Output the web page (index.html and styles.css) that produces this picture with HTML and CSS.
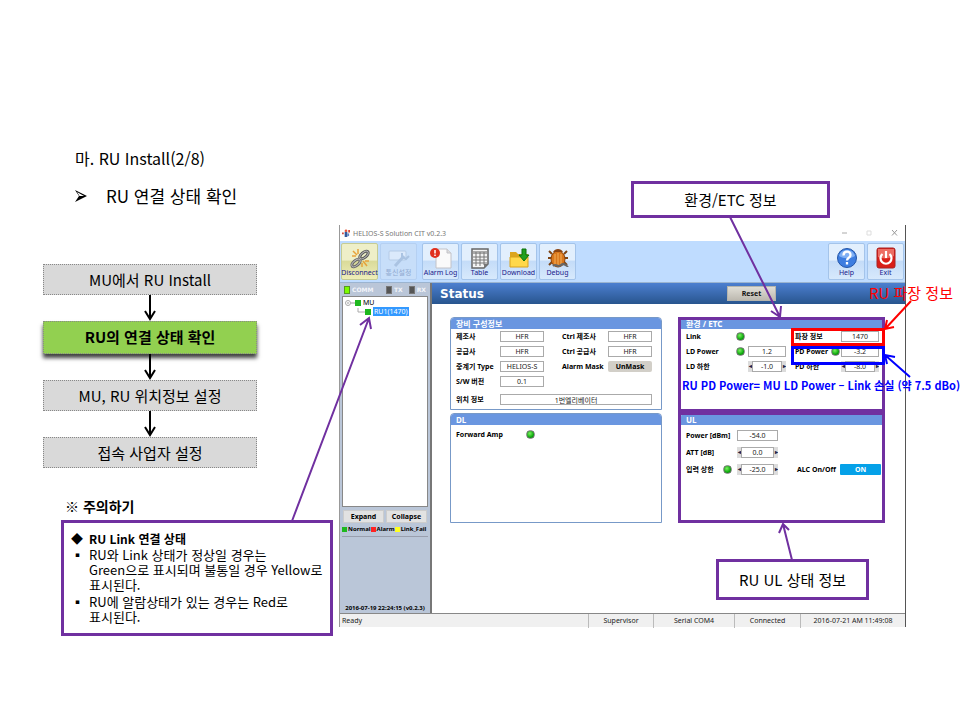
FILE: index.html
```html
<!DOCTYPE html>
<html lang="ko">
<head>
<meta charset="utf-8">
<title>RU Install</title>
<link rel="stylesheet" href="styles.css">
</head>
<body>
<main class="slide">
  <section class="guide">
    <h1 class="title">마. RU Install(2/8)</h1>
    <h2 class="subtitle"><svg class="chevron" viewBox="0 0 12 12"><path d="M0 0 12 6 0 12 4 6Z"/><path d="M2 2 9 6H4.500Z" fill="#fff"/></svg>RU 연결 상태 확인</h2>
    <ol class="flow">
      <li class="step">MU에서 RU Install</li>
      <li class="link"><svg viewBox="0 0 14 26"><path d="M7 0V24M2 16 7 24 12 16"/></svg></li>
      <li class="step current">RU의 연결 상태 확인</li>
      <li class="link"><svg viewBox="0 0 14 26"><path d="M7 0V24M2 16 7 24 12 16"/></svg></li>
      <li class="step">MU, RU 위치정보 설정</li>
      <li class="link"><svg viewBox="0 0 14 26"><path d="M7 0V24M2 16 7 24 12 16"/></svg></li>
      <li class="step">접속 사업자 설정</li>
    </ol>
    <h3 class="caution">※ 주의하기</h3>
    <div class="note">
      <h4>RU Link 연결 상태</h4>
      <ul>
        <li>RU와 Link 상태가 정상일 경우는<br>Green으로 표시되며 불통일 경우 Yellow로<br>표시된다.</li>
        <li>RU에 알람상태가 있는 경우는 Red로<br>표시된다.</li>
      </ul>
    </div>
  </section>

  <section class="app">
    <header class="titlebar">
      <svg class="logo" viewBox="0 0 9 9"><path d="M3 3h3v6H3z" fill="#345a9c"/><circle cx="4.500" cy="2" r="1.500" fill="#e8563a"/><path d="M0 4h2v2H0zM7 1h2v3H7z" fill="#d24a3a"/><path d="M6 5h2v3H6z" fill="#5f86c4"/></svg>
      <span>HELIOS-S Solution CIT v0.2.3</span>
      <svg class="winctl" viewBox="0 0 58 8"><path d="M1 4H6" stroke="#aaa"/><path d="M26 2h4v4h-4z" stroke="#ddd" fill="none"/><path d="M51 1 56 6.500M56 1 51 6.500" stroke="#999"/></svg>
    </header>
    <nav class="toolbar">
      <button class="tool active"><svg viewBox="0 0 22 22"><g fill="none" stroke-width="3"><ellipse cx="15" cy="8" rx="5" ry="2.500" transform="rotate(-40 15 8)" stroke="#555"/><ellipse cx="7" cy="16" rx="5" ry="2.500" transform="rotate(-40 7 16)" stroke="#666"/></g><g fill="none" stroke="#bbb"><ellipse cx="15" cy="8" rx="5" ry="2.500" transform="rotate(-40 15 8)"/><ellipse cx="7" cy="16" rx="5" ry="2.500" transform="rotate(-40 7 16)"/></g><path d="M4 4 8 8M9 2v5M3 9h4M14 14l4 5M13 16v4M16 14h4" stroke="#e7a23a" stroke-width="1.500"/></svg>Disconnect</button>
      <button class="tool" disabled><svg viewBox="0 0 22 22"><rect x="1" y="4" width="17" height="9" rx="1" fill="#dbe9fb" stroke="#b5cbe6"/><path d="M7 19 16 9" stroke="#aac3e2" stroke-width="3"/><path d="M14 6v4l4 2 3-3" fill="none" stroke="#aac3e2" stroke-width="2"/></svg>통신설정</button>
      <button class="tool gap"><svg viewBox="0 0 22 22"><path d="M6 2h11l4 4v15H6z" fill="#fafafa" stroke="#c2c2c8"/><path d="M17 2v4h4" fill="#ddd" stroke="#c2c2c8"/><circle cx="5" cy="6" r="5" fill="#e0301e"/><path d="M5 3v3.500M5 7.500v1.500" stroke="#fff" stroke-width="1.500"/></svg>Alarm Log</button>
      <button class="tool"><svg viewBox="0 0 22 22"><path d="M3 2h16v15l-4 4H3z" fill="#f4f4f4" stroke="#666" stroke-width="1.500"/><path d="M4 4h14v3H4z" fill="#aaa"/><path d="M4 10h14M4 13h14M4 16h14M7 5v14M11 5v14M15 5v13" stroke="#777" fill="none"/><path d="M15 21v-4h4z" fill="#777"/></svg>Table</button>
      <button class="tool"><svg viewBox="0 0 22 22"><path d="M2 5h6l2 2h10v13H2z" fill="#dca51f"/><path d="M2 10h18v10H2z" fill="#ffd84a" stroke="#d9a21c"/><path d="M14 2h4v6h3l-5 6-5-6h3z" fill="#20a020" stroke="#0b710b"/></svg>Download</button>
      <button class="tool"><svg viewBox="0 0 22 22"><path d="M5 7 2 4M17 7l3-3M5 11H1M17 11h4M5 15l-3 3M17 15l3 3" stroke="#7e4515" stroke-width="2"/><ellipse cx="11" cy="12" rx="7" ry="8" fill="#d9771c" stroke="#8d450d"/><path d="M6 5c2-4 8-4 10 0z" fill="#8b4513"/><path d="M8 7v11M11 6v13M14 7v11" stroke="#f5b15a"/><path d="M6 19c3-3 5 2 8-1s6 2 7 1" stroke="#666" stroke-width="2" fill="none"/></svg>Debug</button>
      <button class="tool end"><svg viewBox="0 0 22 22"><circle cx="11" cy="11" r="9.500" fill="#3d7de0" stroke="#2456a8"/><path d="M3 9c2-8 14-8 16 0-5 3-11 3-16 0z" fill="#80b0f4"/><path d="M7.500 8.500c0-5 7-5 7-.5 0 3-3.500 2.500-3.500 5.500M11 15v2.500" fill="none" stroke="#fff" stroke-width="2.300"/></svg>Help</button>
      <button class="tool"><svg viewBox="0 0 22 22"><rect x="2" y="1" width="18" height="20" rx="2" fill="#d91e18" stroke="#a82222"/><path d="M3 2h16v7c-5 3-11 3-16 1z" fill="#ed6d63"/><path d="M7.500 7a5.500 5.500 0 1 0 7 0M11 4v7" fill="none" stroke="#fff" stroke-width="2.200"/></svg>Exit</button>
    </nav>
    <div class="workspace">
      <aside class="sidebar">
        <div class="comm"><span class="lamp lit">COMM</span><span class="lamp">TX</span><span class="lamp">RX</span></div>
        <div class="tree">
          <div class="node"><svg viewBox="0 0 10 8"><circle cx="3" cy="4" r="2.500" fill="#fff" stroke="#aaa"/><path d="M2 4h2M6 4h4" stroke="#999"/></svg><i class="sq green"></i>MU</div>
          <div class="node child"><svg viewBox="0 0 8 8"><path d="M1 0v4h7" fill="none" stroke="#aaa"/></svg><i class="sq green"></i><span class="selected">RU1(1470)</span></div>
        </div>
        <div class="pair"><button>Expand</button><button>Collapse</button></div>
        <div class="legend"><i class="sq green"></i>Normal<i class="sq red"></i>Alarm<i class="sq yellow"></i>Link_Fail</div>
        <time class="stamp">2016-07-19 22:24:15 (v0.2.3)</time>
      </aside>
      <div class="content">
        <div class="pagehead"><h2>Status</h2><button class="reset">Reset</button></div>
        <div class="panels">
          <section class="panel">
            <h3>장비 구성정보</h3>
            <div class="fields config">
              <label for="maker">제조사</label><input id="maker" value="HFR" readonly>
              <label for="cmaker">Ctrl 제조사</label><input id="cmaker" value="HFR" readonly>
              <label for="vendor">공급사</label><input id="vendor" value="HFR" readonly>
              <label for="cvendor">Ctrl 공급사</label><input id="cvendor" value="HFR" readonly>
              <label for="type">중계기 Type</label><input id="type" value="HELIOS-S" readonly>
              <label for="mask">Alarm Mask</label><button id="mask" class="unmask">UnMask</button>
              <label for="sw">S/W 버전</label><input id="sw" value="0.1" readonly>
              <label class="newrow" for="loc">위치 정보</label><input class="wide" id="loc" value="1번엘리베이터" readonly>
            </div>
          </section>
          <section class="panel">
            <h3>환경 / ETC</h3>
            <div class="fields etc">
              <span class="label">Link</span><i class="led"></i><span></span>
              <label class="second" for="wave">파장 정보</label><span></span><input id="wave" value="1470" readonly>
              <label for="ld">LD Power</label><i class="led"></i><input id="ld" value="1.2" readonly>
              <label class="second" for="pd">PD Power</label><i class="led"></i><input id="pd" value="-3.2" readonly>
              <label for="ldlow">LD 하한</label><span></span><span class="spin"><button aria-label="-">◂</button><input id="ldlow" value="-1.0"><button aria-label="+">▸</button></span>
              <label class="second" for="pdlow">PD 하한</label><span></span><span class="spin"><button aria-label="-">◂</button><input id="pdlow" value="-8.0"><button aria-label="+">▸</button></span>
            </div>
          </section>
          <section class="panel">
            <h3>DL</h3>
            <div class="fields dl"><span class="label">Forward Amp</span><i class="led"></i></div>
          </section>
          <section class="panel">
            <h3>UL</h3>
            <div class="fields ul">
              <label class="newrow" for="power">Power [dBm]</label><span></span><input id="power" value="-54.0" readonly>
              <label class="newrow" for="att">ATT [dB]</label><span></span><span class="spin"><button aria-label="-">◂</button><input id="att" value="0.0"><button aria-label="+">▸</button></span>
              <label class="newrow" for="inmax">입력 상한</label><i class="led"></i><span class="spin"><button aria-label="-">◂</button><input id="inmax" value="-25.0"><button aria-label="+">▸</button></span>
              <label for="alc">ALC On/Off</label><button id="alc" class="switch">ON</button>
            </div>
          </section>
        </div>
      </div>
    </div>
    <footer class="statusbar"><span>Ready</span><span>Supervisor</span><span>Serial COM4</span><span>Connected</span><span>2016-07-21 AM 11:49:08</span></footer>
  </section>

  <svg class="marks" viewBox="0 0 960 720">
    <g fill="none" stroke="#7030a0" stroke-width="2">
      <path d="M292 521 369 318M360 325 369 318 371 329"/>
      <path d="M730 217 780 317M771 311 780 317 781 306"/>
      <path d="M792 560 783 524M779 533 783 524 789 530"/>
    </g>
    <g fill="none" stroke="#7030a0" stroke-width="3"><path d="M679.500 318.500H883.500V410.500H679.500ZM679.500 413.500H883.500V521.500H679.500Z"/></g>
    <g fill="none" stroke="#f00"><path d="M792.500 329.500H883.500V344.500H792.500Z" stroke-width="3"/><path d="M911 301 885 329M887 320 885 329 894 327" stroke-width="2"/></g>
    <g fill="none" stroke="#00f"><path d="M792.500 347.500H883.500V363.500H792.500Z" stroke-width="3"/><path d="M910 377 885 355M887 364 885 355 895 357" stroke-width="2"/></g>
  </svg>
  <p class="callout env">환경/ETC 정보</p>
  <p class="callout uplink">RU UL 상태 정보</p>
  <p class="remark wave">RU 파장 정보</p>
  <p class="remark loss">RU PD Power= MU LD Power – Link 손실 (약 7.5 dBo)</p>
</main>
</body>
</html>
```
FILE: styles.css
```css
* { box-sizing: border-box; }
body { margin: 0; background: #fff; color: #000; font-family: "Noto Sans", "Noto Sans CJK KR", sans-serif; }
h1, h2, h3, h4, p, ol, ul { margin: 0; padding: 0; font-weight: normal; }
ol, ul { list-style: none; }
button, input { font: inherit; color: inherit; margin: 0; padding: 0; min-width: 0; }
svg { display: block; }

.slide { position: relative; min-height: 100vh; display: grid; grid-template-columns: 290px 1fr; column-gap: 6px; align-items: start; padding: 146px 54px 0 43px; }

.title, .subtitle { font-family: "Noto Sans CJK KR", sans-serif; font-size: 17px; line-height: 24px; padding-left: 32px; }
.title { font-size: 16px; }
.subtitle { margin-top: 14px; display: flex; align-items: center; gap: 19px; }
.chevron { width: 12px; height: 12px; }
.flow { width: 214px; margin-top: 56px; font-size: 15px; }
.flow, .callout, .remark, .caution, .note { font-family: "Noto Sans CJK KR", sans-serif; }
.step { height: 31px; line-height: 29px; text-align: center; background: #d9d9d9; border: 1px dotted #888; }
.current { background: #92d050; height: 33px; font-weight: bold; box-shadow: 0 4px 4px rgba(0,0,0,.75); }
.link { position: relative; height: 26px; display: flex; justify-content: center; }
.link svg { width: 14px; height: 26px; fill: none; stroke: #000; stroke-width: 2; }
.caution { margin: 27px 0 3px 22px; font-size: 14px; line-height: 22px; font-weight: bold; }
.note { margin-left: 18px; border: 3px solid #7030a0; background: #fff; padding: 7px 7px 9px; font-size: 13px; line-height: 15px; }
.note h4, .note li { position: relative; padding-left: 18px; white-space: nowrap; }
.note h4 { font-size: 12px; font-weight: bold; line-height: 17px; }
.note li + li { margin-top: 2px; }
.note h4::before, .note li::before { position: absolute; left: 0; }
.note h4::before { content: "◆"; }
.note li::before { content: "▪"; }

.app { margin-top: 79px; border: 1px solid #555; border-width: 0 1px 0 1px; border-left-color: #999; font-size: 7px; line-height: 9px; background: #fff; min-width: 0; }
.titlebar { height: 16px; display: flex; align-items: center; gap: 3px; padding: 0 6px 0 2px; color: #777; }
.logo { width: 8px; height: 8px; }
.winctl { width: 58px; height: 8px; margin-left: auto; }
.toolbar { height: 42px; display: flex; gap: 2px; padding: 2px 1px; background: #bfdcff; border-bottom: 1px solid #9bb4d0; }
.tool { width: 37px; height: 37px; display: flex; flex-direction: column; align-items: center; justify-content: space-between; padding: 3px 0 2px; border: 1px solid #a4c4ea; border-radius: 2px; background: linear-gradient(#e2effd 45%, #c4dcf8 50%, #d7e9fc); color: #20208a; line-height: 8px; white-space: nowrap; }
.tool svg { width: 22px; height: 22px; }
.tool.active { background: linear-gradient(#eeefc8 45%, #dadb9a 50%, #eeeeb8); border-color: #c5cc94; }
.tool:disabled { color: #8fa9d0; background: #c7def9; border-color: #b5d0f2; }
.tool.gap { margin-left: 3px; }
.tool.end { margin-left: auto; }
.workspace { display: grid; grid-template-columns: 92px 1fr; border-bottom: 1px solid #888; min-height: 331px; }
.sidebar { display: flex; flex-direction: column; background: #bac6d8; border-right: 2px solid #777; padding: 0 2px; font-weight: bold; }
.comm { height: 13px; display: flex; align-items: center; gap: 6px; padding: 0 2px; color: #f3f5fa; font-family: "DejaVu Sans", sans-serif; font-size: 6px; }
.lamp::before { content: ""; display: inline-block; width: 4px; height: 6px; margin-right: 2px; background: #555; border: 1px solid #777; vertical-align: middle; }
.lamp.lit { margin-right: auto; }
.lamp.lit::before { background: #7cfc00; border-color: #559922; }
.tree { height: 211px; background: #fff; border: 1px solid #888; padding: 1px 2px; font-weight: normal; }
.node { display: flex; align-items: center; height: 9px; }
.node svg { width: 10px; height: 8px; }
.node.child { padding-left: 12px; }
.node.child svg { width: 8px; }
.sq { width: 6px; height: 6px; margin-right: 2px; flex: none; }
.green { background: #1eb81e; }
.red { background: #f22; }
.yellow { background: #ff2; }
.selected { background: #3399ff; color: #fff; padding: 0 1px; }
.pair { display: grid; grid-template-columns: 1fr 1fr; gap: 2px; margin: 3px 1px 0; }
.pair button { height: 13px; background: #e2e2e2; border: 1px solid #ccc; line-height: 10px; }
.legend { display: flex; align-items: center; height: 14px; font-size: 6px; white-space: nowrap; border-bottom: 1px solid #999fae; }
.legend .sq { width: 5px; height: 5px; margin: 0 1px 0 0; }
.stamp { margin-top: auto; text-align: center; font-size: 6px; line-height: 10px; white-space: nowrap; }
.content { min-width: 0; }
.pagehead { height: 21px; display: flex; align-items: center; justify-content: space-between; padding: 0 129px 0 8px; background: linear-gradient(#4c7fd0, #28558e); color: #fff; }
.pagehead h2 { font: bold 12px "DejaVu Sans", sans-serif; }
.reset { width: 49px; height: 15px; background: linear-gradient(#e0ded6, #bdb9b0); border: 1px solid #b5b5ad; color: #111; font-weight: bold; line-height: 12px; }
.panels { display: grid; grid-template-columns: 212fr 205fr; grid-template-rows: 93px 110px; gap: 3px 18px; padding: 13px 20px 0 18px; }
.panel { border: 1px solid #7799c8; border-radius: 4px 4px 0 0; overflow: hidden; }
.panel h3 { height: 11px; padding-left: 5px; background: #6a96e0; color: #fff; font-weight: bold; font-size: 8px; line-height: 11px; }
.fields { display: grid; align-items: center; font-weight: bold; padding: 2px 5px; grid-auto-rows: 11px; row-gap: 4px; white-space: nowrap; }
.fields input { width: 100%; height: 11px; border: 1px solid #aaa; background: #fff; color: #222; text-align: center; font-weight: normal; line-height: 9px; border-radius: 0; }
.newrow { grid-column-start: 1; }
.config { grid-template-columns: 44px 44px 1fr 44px; grid-template-rows: repeat(4, 11px) 17px; padding-right: 9px; }
.config label:nth-of-type(even):not(.newrow) { padding-left: 18px; }
.config .wide { grid-column: 2 / 5; }
.etc { grid-template-columns: 50px 12px 38px 1fr 10px 38px; padding-right: 5px; }
.etc .second { padding-left: 9px; }
.dl { grid-template-columns: 70px 1fr; padding-top: 4px; }
.ul { grid-template-columns: 37px 14px 41px 1fr 41px; padding-top: 5px; padding-right: 3px; row-gap: 6px; }
.ul label[for="alc"] { padding-left: 19px; }
.led { width: 9px; height: 9px; border-radius: 50%; border: 1px solid #777; background: radial-gradient(circle at 40% 35%, #7cf060, #0caa0c 60%, #087008); }
.unmask { height: 11px; border: 0; border-radius: 2px; background: #d2cfc8; font-weight: bold; line-height: 11px; }
.switch { height: 11px; border: 0; border-radius: 1px; background: #05a1e8; color: #fff; font-weight: bold; line-height: 11px; }
.spin { display: grid; grid-template-columns: 4px 1fr 4px; }
.spin button { height: 11px; background: #dcdcdc; border: 0; font-size: 6px; line-height: 11px; color: #224; overflow: hidden; }
.statusbar { display: grid; grid-template-columns: 1fr 65px 81px 66px 105px; height: 13px; background: #f0f0f0; color: #222; line-height: 14px; text-align: center; }
.statusbar span + span { border-left: 1px solid #bbb; }
.statusbar span:first-child { text-align: left; padding-left: 2px; }

.marks { position: absolute; left: 0; top: 0; width: 960px; height: 720px; pointer-events: none; }
.callout { position: absolute; border: 3px solid #7030a0; background: #fff; text-align: center; font-size: 15px; }
.env { left: 631px; top: 181px; width: 199px; line-height: 31px; }
.uplink { left: 716px; top: 559px; width: 153px; line-height: 35px; }
.remark { position: absolute; white-space: nowrap; }
.remark.wave { left: 869px; top: 283px; color: #f00; font-size: 15px; line-height: 20px; }
.remark.loss { left: 682px; top: 377px; color: #00f; font-size: 11px; line-height: 16px; font-weight: bold; }
```
